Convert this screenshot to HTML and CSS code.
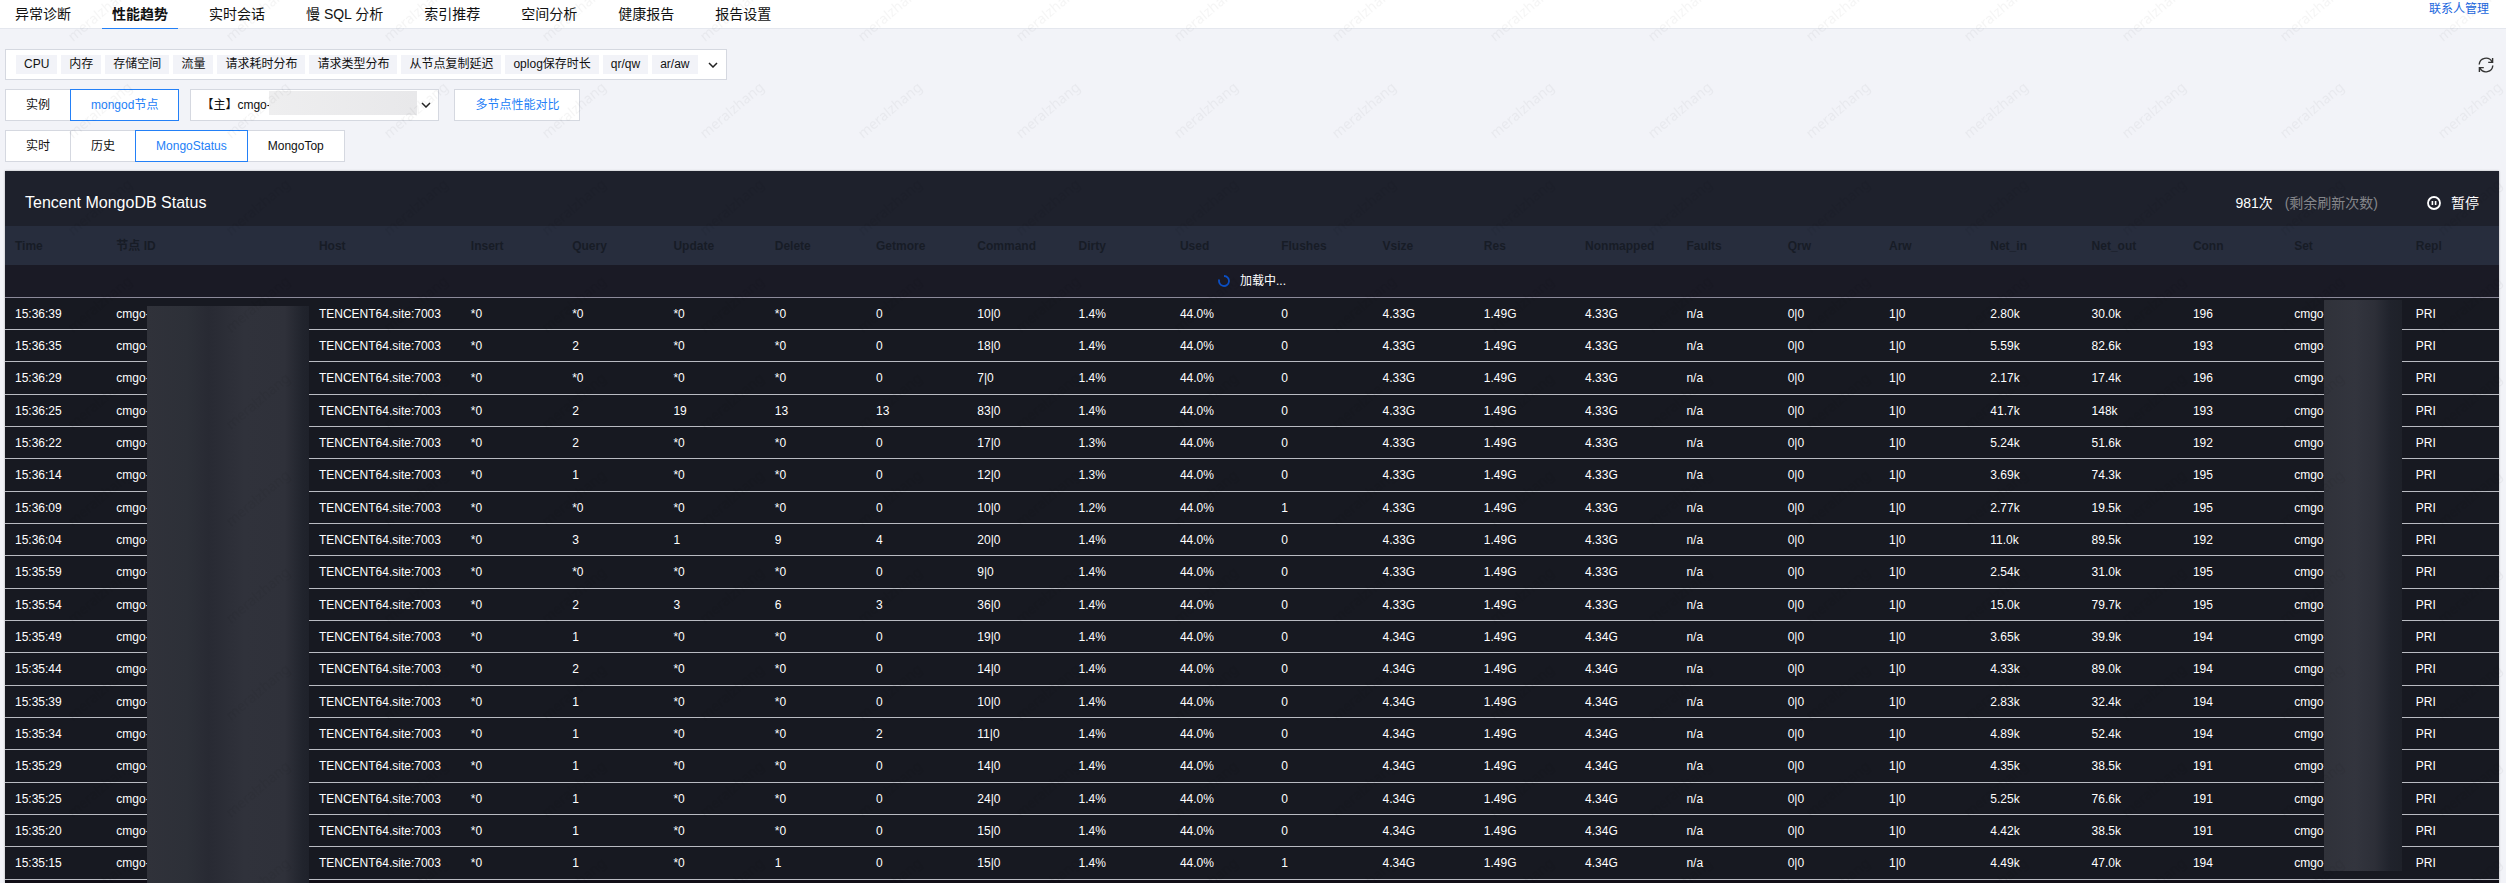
FILE: index.html
```html
<!DOCTYPE html>
<html lang="zh-CN">
<head>
    <meta charset="UTF-8">
    <meta name="viewport" content="width=device-width, initial-scale=1.0">
    <title>性能趋势 - MongoStatus</title>
    <link rel="stylesheet" href="styles.css">
</head>
<body>

<!-- Top navigation -->
<header class="top-bar">
    <nav class="tabs">
        <a class="tab" href="#">异常诊断</a>
        <a class="tab active" href="#">性能趋势</a>
        <a class="tab" href="#">实时会话</a>
        <a class="tab" href="#">慢 SQL 分析</a>
        <a class="tab" href="#">索引推荐</a>
        <a class="tab" href="#">空间分析</a>
        <a class="tab" href="#">健康报告</a>
        <a class="tab" href="#">报告设置</a>
    </nav>
    <a class="contact-link" href="#">联系人管理</a>
</header>

<main class="content">
    <!-- Metric filter -->
    <div class="filter-row">
        <div class="metric-box">
            <span class="tag">CPU</span>
            <span class="tag">内存</span>
            <span class="tag">存储空间</span>
            <span class="tag">流量</span>
            <span class="tag">请求耗时分布</span>
            <span class="tag">请求类型分布</span>
            <span class="tag">从节点复制延迟</span>
            <span class="tag">oplog保存时长</span>
            <span class="tag">qr/qw</span>
            <span class="tag">ar/aw</span>
            <button class="icon-btn metric-arrow" type="button" aria-label="展开">
                <svg width="10" height="6" viewBox="0 0 10 6"><path d="M1 1l4 4 4-4" fill="none" stroke="#222" stroke-width="1.5"/></svg>
            </button>
        </div>
        <button class="icon-btn" type="button" aria-label="刷新">
            <svg width="16" height="16" viewBox="0 0 16 16" fill="none" stroke="#333" stroke-width="1.4">
                <path d="M1.2 7.5A6.8 6.8 0 0 1 14 4.8M14.8 8.5A6.8 6.8 0 0 1 2 11.2"/>
                <path d="M14.6 1v4.4h-4.4M1.4 15v-4.4h4.4"/>
            </svg>
        </button>
    </div>

    <!-- Node selection -->
    <div class="control-row">
        <div class="segment">
            <button class="btn" type="button">实例</button>
            <button class="btn selected" type="button">mongod节点</button>
        </div>
        <div class="node-select">
            <select aria-label="节点">
                <option>【主】cmgo-</option>
            </select>
            <span class="select-mask"></span>
            <svg class="select-arrow" width="10" height="6" viewBox="0 0 10 6"><path d="M1 1l4 4 4-4" fill="none" stroke="#222" stroke-width="1.5"/></svg>
        </div>
        <button class="btn btn-link" type="button">多节点性能对比</button>
    </div>

    <!-- View selection -->
    <div class="control-row">
        <div class="segment">
            <button class="btn" type="button">实时</button>
            <button class="btn" type="button">历史</button>
            <button class="btn selected" type="button">MongoStatus</button>
            <button class="btn" type="button">MongoTop</button>
        </div>
    </div>

    <!-- Status panel -->
    <section class="panel">
        <div class="panel-header">
            <h2>Tencent MongoDB Status</h2>
            <div class="panel-actions">
                <span>981次 <span class="muted">(剩余刷新次数)</span></span>
                <button class="pause-btn" type="button">
                    <svg width="14" height="14" viewBox="0 0 14 14" fill="none" stroke="#fff">
                        <circle cx="7" cy="7" r="6" stroke-width="1.8"/>
                        <path d="M5.4 5v4M8.6 5v4" stroke-width="1.6"/>
                    </svg>
                    暂停
                </button>
            </div>
        </div>
        <div class="table-wrap">
            <table class="status-table">
                <colgroup>
                    <col class="col-base"><col class="col-id"><col class="col-host">
                    <col class="col-base" span="18">
                    <col class="col-set"><col class="col-repl">
                </colgroup>
                <thead>
                    <tr>
                        <th>Time</th><th>节点 ID</th><th>Host</th><th>Insert</th><th>Query</th>
                        <th>Update</th><th>Delete</th><th>Getmore</th><th>Command</th><th>Dirty</th>
                        <th>Used</th><th>Flushes</th><th>Vsize</th><th>Res</th><th>Nonmapped</th>
                        <th>Faults</th><th>Qrw</th><th>Arw</th><th>Net_in</th><th>Net_out</th>
                        <th>Conn</th><th>Set</th><th>Repl</th>
                    </tr>
                    <tr class="loading-row">
                        <td colspan="23">
                            <div class="loading">
                                <svg width="12" height="12" viewBox="0 0 12 12"><path d="M6 1a5 5 0 1 1-4.8 3.6" fill="none" stroke="#0b4fc4" stroke-width="1.8"/></svg>
                                加载中...
                            </div>
                        </td>
                    </tr>
                </thead>
                <tbody id="status-body"></tbody>
            </table>
            <div class="mask mask-id"></div>
            <div class="mask mask-set"></div>
        </div>
    </section>
</main>

<!-- Watermark -->
<svg class="watermark" aria-hidden="true">
    <defs>
        <pattern id="wm" x="59" y="-40" width="158" height="97" patternUnits="userSpaceOnUse">
            <text x="14" y="82" transform="rotate(-40 14 82)">meralzhang</text>
        </pattern>
    </defs>
    <rect width="100%" height="100%" fill="url(#wm)"/>
</svg>

<script>
    // time, query, update, delete, getmore, command, dirty, flushes, size, net_in, net_out, conn
    const rows = [
        ["15:36:39", "*0", "*0", "*0", "0", "10|0", "1.4%", "0", "4.33G", "2.80k", "30.0k", "196"],
        ["15:36:35", "2", "*0", "*0", "0", "18|0", "1.4%", "0", "4.33G", "5.59k", "82.6k", "193"],
        ["15:36:29", "*0", "*0", "*0", "0", "7|0", "1.4%", "0", "4.33G", "2.17k", "17.4k", "196"],
        ["15:36:25", "2", "19", "13", "13", "83|0", "1.4%", "0", "4.33G", "41.7k", "148k", "193"],
        ["15:36:22", "2", "*0", "*0", "0", "17|0", "1.3%", "0", "4.33G", "5.24k", "51.6k", "192"],
        ["15:36:14", "1", "*0", "*0", "0", "12|0", "1.3%", "0", "4.33G", "3.69k", "74.3k", "195"],
        ["15:36:09", "*0", "*0", "*0", "0", "10|0", "1.2%", "1", "4.33G", "2.77k", "19.5k", "195"],
        ["15:36:04", "3", "1", "9", "4", "20|0", "1.4%", "0", "4.33G", "11.0k", "89.5k", "192"],
        ["15:35:59", "*0", "*0", "*0", "0", "9|0", "1.4%", "0", "4.33G", "2.54k", "31.0k", "195"],
        ["15:35:54", "2", "3", "6", "3", "36|0", "1.4%", "0", "4.33G", "15.0k", "79.7k", "195"],
        ["15:35:49", "1", "*0", "*0", "0", "19|0", "1.4%", "0", "4.34G", "3.65k", "39.9k", "194"],
        ["15:35:44", "2", "*0", "*0", "0", "14|0", "1.4%", "0", "4.34G", "4.33k", "89.0k", "194"],
        ["15:35:39", "1", "*0", "*0", "0", "10|0", "1.4%", "0", "4.34G", "2.83k", "32.4k", "194"],
        ["15:35:34", "1", "*0", "*0", "2", "11|0", "1.4%", "0", "4.34G", "4.89k", "52.4k", "194"],
        ["15:35:29", "1", "*0", "*0", "0", "14|0", "1.4%", "0", "4.34G", "4.35k", "38.5k", "191"],
        ["15:35:25", "1", "*0", "*0", "0", "24|0", "1.4%", "0", "4.34G", "5.25k", "76.6k", "191"],
        ["15:35:20", "1", "*0", "*0", "0", "15|0", "1.4%", "0", "4.34G", "4.42k", "38.5k", "191"],
        ["15:35:15", "1", "*0", "1", "0", "15|0", "1.4%", "1", "4.34G", "4.49k", "47.0k", "194"]
    ];

    const body = document.getElementById("status-body");

    rows.forEach(([time, query, update, del, getmore, command, dirty, flushes, size, netIn, netOut, conn]) => {
        const tr = document.createElement("tr");
        const cells = [time, "cmgo-", "TENCENT64.site:7003", "*0", query, update, del, getmore, command,
            dirty, "44.0%", flushes, size, "1.49G", size, "n/a", "0|0", "1|0", netIn, netOut, conn, "cmgo-", "PRI"];
        cells.forEach(text => {
            const td = document.createElement("td");
            td.textContent = text;
            tr.appendChild(td);
        });
        body.appendChild(tr);
    });
</script>
</body>
</html>
```
FILE: styles.css
```css
:root {
    --page-bg: #f2f3f8;
    --border-color: #d5d8e0;
    --primary: #2380f7;
    --panel-bg: #1e212c;
    --head-bg: #272d3d;
    --row-bg: #171921;
}

* {
    box-sizing: border-box;
}

body {
    margin: 0;
    background-color: var(--page-bg);
    color: #111;
    font-family: "Liberation Sans", "Noto Sans CJK SC", sans-serif;
    font-size: 12px;
    line-height: 18px;
}

button,
select {
    font: inherit;
    color: inherit;
    cursor: pointer;
}

svg {
    display: block;
}

/* Top navigation */
.top-bar {
    display: flex;
    justify-content: space-between;
    padding: 0 17px 0 5px;
    background-color: #fff;
    border-bottom: 1px solid #e4e7ee;
}

.tabs {
    display: flex;
    gap: 21px;
}

.tab {
    margin-bottom: -1px;
    padding: 0 10px;
    border-bottom: 1px solid var(--tab-line, transparent);
    color: #111;
    font-size: 14px;
    line-height: 28px;
    text-decoration: none;
}

.tab.active {
    --tab-line: var(--primary);
    font-weight: bold;
}

.contact-link {
    color: #1a66dd;
    text-decoration: none;
}

/* Filters */
.content {
    display: flex;
    flex-direction: column;
    gap: 9px;
    padding: 20px 7px 0 5px;
}

.filter-row {
    display: flex;
    align-items: center;
    justify-content: space-between;
    padding-right: 5px;
}

.metric-box {
    display: flex;
    align-items: center;
    gap: 4px;
    height: 31px;
    padding: 0 8px 0 10px;
    background-color: #fff;
    border: 1px solid var(--border-color);
}

.tag {
    padding: 0 8px;
    background-color: var(--page-bg);
    line-height: 19px;
}

.icon-btn {
    padding: 0;
    background: none;
    border: none;
}

.metric-arrow {
    margin-left: 6px;
}

.control-row {
    display: flex;
    gap: 11px;
}

.segment {
    display: flex;
}

.btn {
    height: 32px;
    padding: 0 20px;
    background-color: #fff;
    border: 1px solid var(--border-color);
}

.segment .btn + .btn {
    margin-left: -1px;
}

.btn.selected {
    position: relative;
    border-color: var(--primary);
    color: var(--primary);
}

.btn-link {
    margin-left: 4px;
    color: var(--primary);
}

.node-select {
    position: relative;
    width: 249px;
}

.node-select select {
    width: 100%;
    height: 32px;
    padding: 0 10px;
    background-color: #fff;
    border: 1px solid var(--border-color);
    border-radius: 0;
    appearance: none;
}

.select-mask {
    position: absolute;
    top: 2px;
    right: 22px;
    width: 148px;
    height: 24px;
    background: linear-gradient(90deg, #eeeeef, #e8e8ea);
    pointer-events: none;
}

.select-arrow {
    position: absolute;
    top: 13px;
    right: 8px;
    pointer-events: none;
}

/* Status panel */
.panel {
    background-color: #110f17;
    box-shadow: 0 0 2px rgba(0, 0, 0, 0.3);
    color: #fff;
}

.panel-header {
    display: flex;
    align-items: center;
    justify-content: space-between;
    height: 55px;
    padding: 8px 20px 0;
    background-color: var(--panel-bg);
}

.panel-header h2 {
    margin: 0;
    font-size: 16px;
    font-weight: normal;
}

.panel-actions {
    display: flex;
    align-items: center;
    gap: 49px;
    font-size: 14px;
}

.muted {
    margin-left: 8px;
    color: #85868a;
}

.pause-btn {
    display: flex;
    align-items: center;
    gap: 10px;
    padding: 0;
    background: none;
    border: none;
}

.table-wrap {
    position: relative;
    padding-bottom: 3px;
}

.status-table {
    width: 100%;
    table-layout: fixed;
    border-collapse: separate;
    border-spacing: 0;
}

.col-base {
    width: 100px;
}

.col-id {
    width: 200px;
}

.col-host {
    width: 150px;
}

.col-set {
    width: 120px;
}

.col-repl {
    width: 92px;
}

.status-table th,
.status-table td {
    padding: 0 10px;
    text-align: left;
    white-space: nowrap;
}

.status-table th {
    height: 39px;
    background-color: var(--head-bg);
    color: #171c26;
}

.status-table td {
    height: 32px;
    background-color: var(--row-bg);
    border-bottom: 1px solid #b9bbc2;
}

.status-table tbody tr:nth-child(3n) td {
    height: 33px;
}

.status-table .loading-row td {
    height: 33px;
    background-color: #1a1a25;
    border-bottom-color: #8c8a9a;
}

.loading {
    display: flex;
    align-items: center;
    justify-content: center;
    gap: 10px;
}

/* Covers the sensitive part of the ids */
.mask {
    position: absolute;
}

.mask-id {
    top: 80px;
    bottom: 0;
    left: 5.7%;
    width: 6.5%;
    background: linear-gradient(90deg, #30323a, #2d3038 25%, #282a33 38%, #30323b 60%, #2f313a 85%, #21242d 96%, #1f222b);
}

.mask-set {
    top: 74px;
    bottom: 12px;
    left: 93%;
    width: 3.1%;
    background: linear-gradient(90deg, #30323a, #33353e 40%, #2d2f38 65%, #20232c 85%, #1e2129);
}

.watermark {
    position: fixed;
    inset: 0;
    width: 100%;
    height: 100%;
    pointer-events: none;
}

.watermark text {
    fill: rgba(0, 0, 0, 0.04);
    font-family: "Noto Sans", sans-serif;
    font-size: 14px;
}
```
